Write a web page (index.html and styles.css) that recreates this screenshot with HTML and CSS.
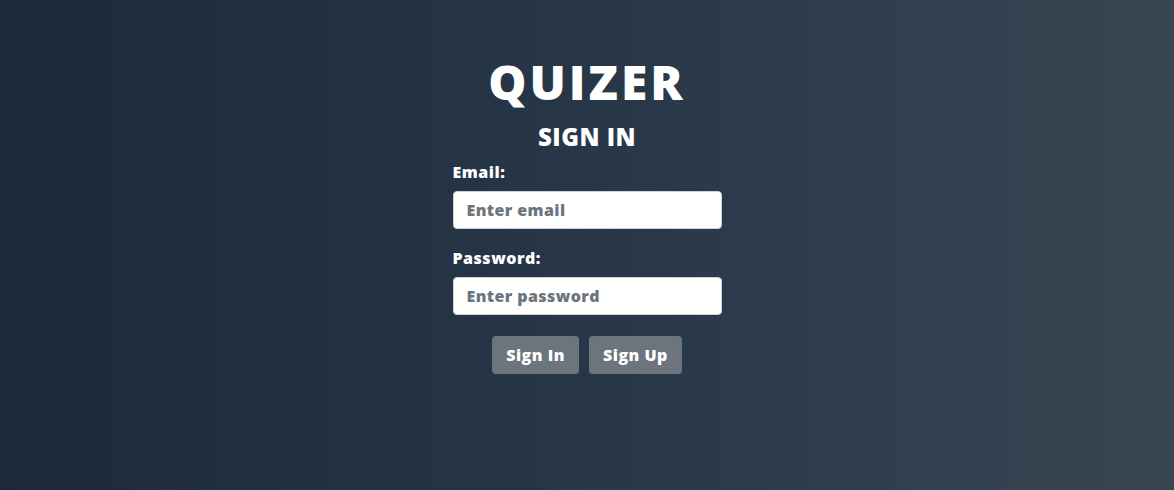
FILE: index.html
```html
<!DOCTYPE html>
<html lang="en">
<head>
<meta charset="utf-8">
<title>Quizer - Sign In</title>
<link rel="stylesheet" href="styles.css">
</head>
<body>
<main class="page">
  <h1 class="brand">QUIZER</h1>
  <h2 class="title">SIGN IN</h2>
  <form class="form">
    <label class="label" for="email">Email:</label>
    <input class="input" id="email" type="email" placeholder="Enter email">
    <label class="label" for="password">Password:</label>
    <input class="input" id="password" type="password" placeholder="Enter password">
    <div class="actions">
      <button type="button" class="btn">Sign In</button>
      <button type="button" class="btn">Sign Up</button>
    </div>
  </form>
</main>
</body>
</html>
```

FILE: styles.css
```css
html, body {
  margin: 0;
  height: 100%;
}
body {
  background: linear-gradient(to right, #1b293b 0%, #283748 50%, #384653 100%);
  font-family: "Open Sans", "DejaVu Sans", sans-serif;
  color: #fff;
}
.page {
  display: flex;
  flex-direction: column;
  align-items: center;
  padding-top: 52px;
}
.brand {
  margin: 0;
  font-size: 48px;
  font-weight: 800;
  line-height: 60px;
  letter-spacing: 3px;
}
.title {
  margin: 0;
  margin-top: 5px;
  font-size: 24px;
  font-weight: 800;
  line-height: 40px;
  letter-spacing: 0.5px;
}
.form {
  width: 269px;
  display: flex;
  flex-direction: column;
  margin-top: 4px;
}
.label {
  font-size: 16px;
  font-weight: 800;
  line-height: 22px;
  margin-bottom: 8px;
  letter-spacing: 0.5px;
}
.input {
  box-sizing: border-box;
  height: 38px;
  width: 100%;
  border: 1px solid #ced4da;
  border-radius: 4px;
  padding: 0 13px;
  font-family: inherit;
  font-size: 16px;
  font-weight: 800;
  letter-spacing: 0.4px;
  color: #495057;
  margin-bottom: 18px;
}
.input::placeholder {
  color: #6c757d;
}
.actions {
  display: flex;
  justify-content: center;
  gap: 10px;
  margin-top: 3px;
}
.btn {
  height: 38px;
  padding: 0 14px;
  border: 0;
  border-radius: 4px;
  background: #6c757d;
  color: #fff;
  font-family: inherit;
  font-size: 16px;
  font-weight: 800;
  letter-spacing: 0.5px;
}
```
